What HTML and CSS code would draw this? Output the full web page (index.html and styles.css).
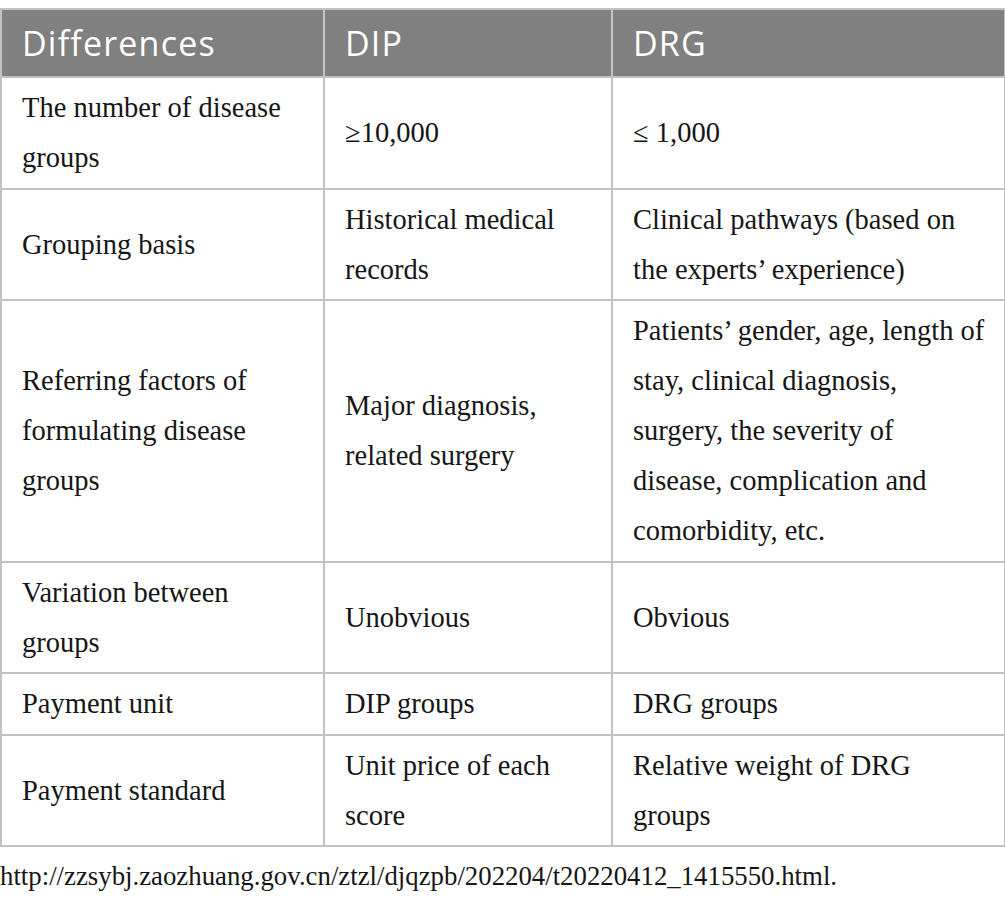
FILE: index.html
```html
<!DOCTYPE html>
<html lang="en">
<head>
<meta charset="utf-8">
<title>DIP vs DRG</title>
<link rel="stylesheet" href="styles.css">
</head>
<body>
<table class="cmp">
  <colgroup>
    <col class="c1"><col class="c2"><col class="c3">
  </colgroup>
  <thead>
    <tr><th>Differences</th><th>DIP</th><th>DRG</th></tr>
  </thead>
  <tbody>
    <tr><td>The number of disease<br>groups</td><td>&ge;10,000</td><td>&le; 1,000</td></tr>
    <tr><td>Grouping basis</td><td>Historical medical<br>records</td><td>Clinical pathways (based on<br>the experts&rsquo; experience)</td></tr>
    <tr><td>Referring factors of<br>formulating disease<br>groups</td><td>Major diagnosis,<br>related surgery</td><td>Patients&rsquo; gender, age, length of<br>stay, clinical diagnosis,<br>surgery, the severity of<br>disease, complication and<br>comorbidity, etc.</td></tr>
    <tr><td>Variation between<br>groups</td><td>Unobvious</td><td>Obvious</td></tr>
    <tr><td>Payment unit</td><td>DIP groups</td><td>DRG groups</td></tr>
    <tr><td>Payment standard</td><td>Unit price of each<br>score</td><td>Relative weight of DRG<br>groups</td></tr>
  </tbody>
</table>
<p class="note">http://zzsybj.zaozhuang.gov.cn/ztzl/djqzpb/202204/t20220412_1415550.html.</p>
</body>
</html>
```

FILE: styles.css
```css
html, body {
  margin: 0;
  padding: 0;
  background: #ffffff;
}
body {
  padding-top: 8px;
}
.cmp {
  width: 1004px;
  border-collapse: collapse;
  table-layout: fixed;
  font-family: "Liberation Serif", "Times New Roman", serif;
  font-size: 28.5px;
  color: #161616;
}
.c1 { width: 323px; }
.c2 { width: 288px; }
.c3 { width: 393px; }
.cmp th, .cmp td {
  border: 2px solid #c2c2c2;
  text-align: left;
  vertical-align: middle;
  padding: 5px 10px 4.5px 20px;
  line-height: 50px;
  white-space: nowrap;
  overflow: hidden;
}
.cmp th {
  background: #808080;
  color: #ffffff;
  font-family: "Open Sans", "Noto Sans", sans-serif;
  font-weight: 400;
  font-size: 34px;
  letter-spacing: 1.2px;
  height: 60px;
  padding-top: 3px;
  padding-bottom: 3px;
}
.note {
  margin: 14px 0 0 0;
  font-family: "Liberation Serif", "Times New Roman", serif;
  font-size: 26.8px;
  color: #161616;
}
```
